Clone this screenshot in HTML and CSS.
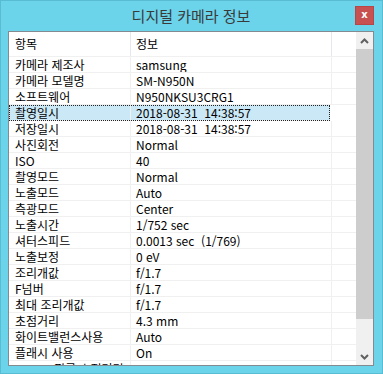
FILE: index.html
```html
<!DOCTYPE html>
<html lang="ko">
<head>
  <meta charset="UTF-8" />
  <title>디지털 카메라 정보</title>
  <link rel="stylesheet" href="styles.css">
</head>
<body>
  <div class="window">
    <div class="titlebar">
      <span></span>
      <div class="title">디지털 카메라 정보</div>
      <div class="close">x</div>
    </div>

    <div class="listview">
      <div class="list">
        <div class="header">
          <div class="col">항목</div>
          <div class="col">정보</div>
          <div class="col"></div>
        </div>
        <div id="rows"></div>
      </div>

      <!-- Scrollbar -->
      <div class="scrollbar">
        <div class="arrow">
          <svg width="9" height="6" viewBox="0 0 9 6"><polyline points="1,5 4.5,1.5 8,5" fill="none" stroke="#606060" stroke-width="2"/></svg>
        </div>
        <div class="thumb"></div>
        <div class="track"></div>
        <div class="arrow">
          <svg width="9" height="6" viewBox="0 0 9 6"><polyline points="1,1 4.5,4.5 8,1" fill="none" stroke="#606060" stroke-width="2"/></svg>
        </div>
      </div>
    </div>
  </div>

  <script>
    const items = [
      ["카메라 제조사", "samsung"],
      ["카메라 모델명", "SM-N950N"],
      ["소프트웨어", "N950NKSU3CRG1"],
      ["촬영일시", "2018-08-31  14:38:57"],
      ["저장일시", "2018-08-31  14:38:57"],
      ["사진회전", "Normal"],
      ["ISO", "40"],
      ["촬영모드", "Normal"],
      ["노출모드", "Auto"],
      ["측광모드", "Center"],
      ["노출시간", "1/752 sec"],
      ["셔터스피드", "0.0013 sec  (1/769)"],
      ["노출보정", "0 eV"],
      ["조리개값", "f/1.7"],
      ["F넘버", "f/1.7"],
      ["최대 조리개값", "f/1.7"],
      ["초점거리", "4.3 mm"],
      ["화이트밸런스사용", "Auto"],
      ["플래시 사용", "On"],
      ["35mm 필름 초점거리", "26"]
    ];

    const rows = document.getElementById("rows");

    items.forEach((item, i) => {
      const row = document.createElement("div");
      row.className = "row" + (i === 3 ? " selected" : "");
      row.innerHTML = `<div class="col">${item[0]}</div><div class="col">${item[1]}</div><div class="col"></div>`;
      rows.appendChild(row);
    });
  </script>
</body>
</html>
```

FILE: styles.css
```css
body {
  margin: 0;
  font-family: "Noto Sans CJK KR", "Liberation Sans", sans-serif;
}

.window {
  width: 383px;
  height: 374px;
  box-sizing: border-box;
  background: #6bd4ea;
  border: 1px solid #58bcd2;
  padding: 0 8px 0 7px;
}

.titlebar {
  display: grid;
  grid-template-columns: 1fr auto 1fr;
  align-items: start;
  height: 30px;
}

.title {
  font-size: 15px;
  line-height: 15px;
  color: #3a3a3a;
  margin-top: 7px;
}

.close {
  justify-self: end;
  margin-top: 5px;
  width: 19px;
  height: 19px;
  box-sizing: border-box;
  background: #c75050;
  border: 1px solid #b94646;
  color: white;
  font-family: "DejaVu Sans", sans-serif;
  font-weight: bold;
  font-size: 10px;
  line-height: 16px;
  text-align: center;
}

.listview {
  display: flex;
  height: 335px;
  box-sizing: border-box;
  background: white;
  border: 1px solid #838a90;
  overflow: hidden;
}

.list {
  flex: 1;
  overflow: hidden;
}

.header, .row {
  display: grid;
  grid-template-columns: 122px 201px 1fr;
  font-size: 12px;
  color: #000;
}

.header {
  height: 25px;
  line-height: 24px;
  border-bottom: 1px solid #f0f0f0;
  box-sizing: border-box;
}

.header .col {
  border-right: 1px solid #e3e8ee;
}

.row {
  height: 16px;
  line-height: 15px;
  border-bottom: 1px solid #f0f0f0;
  box-sizing: border-box;
}

.col {
  padding-left: 6px;
  white-space: pre;
  overflow: hidden;
  border-right: 1px solid #f0f0f0;
}

.col:last-child {
  border-right: none;
}

.row .col:nth-child(2), .header .col:nth-child(2) {
  padding-left: 5px;
}

.row.selected {
  background: #cbe8f6;
  outline: 1px dotted #222;
  outline-offset: -1px;
  margin-right: 26px;
}

.row.selected .col:nth-child(2) {
  border-right: none;
}

.scrollbar {
  width: 17px;
  display: flex;
  flex-direction: column;
  background: #f0f0f0;
}

.arrow {
  height: 17px;
  display: flex;
  align-items: center;
  justify-content: center;
}

.thumb {
  height: 270px;
  background: #cdcdcd;
}

.track {
  flex: 1;
}
```
